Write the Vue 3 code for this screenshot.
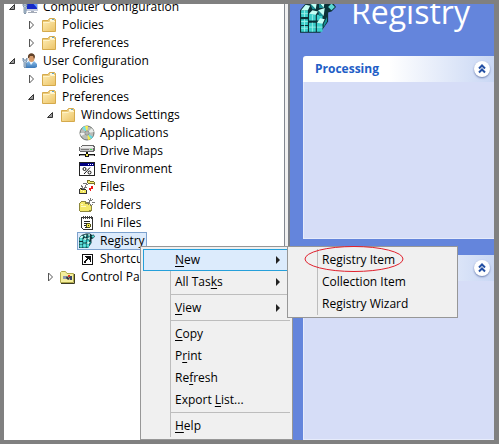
<script setup>
const tree = [
  { label: 'Computer Configuration', icon: 'computer', level: 0, state: 'open' },
  { label: 'Policies', icon: 'folder', level: 1, state: 'closed' },
  { label: 'Preferences', icon: 'folder', level: 1, state: 'closed' },
  { label: 'User Configuration', icon: 'user', level: 0, state: 'open' },
  { label: 'Policies', icon: 'folder', level: 1, state: 'closed' },
  { label: 'Preferences', icon: 'folder', level: 1, state: 'open' },
  { label: 'Windows Settings', icon: 'folder', level: 2, state: 'open' },
  { label: 'Applications', icon: 'disc', level: 3 },
  { label: 'Drive Maps', icon: 'drive', level: 3 },
  { label: 'Environment', icon: 'environment', level: 3 },
  { label: 'Files', icon: 'files', level: 3 },
  { label: 'Folders', icon: 'folders', level: 3 },
  { label: 'Ini Files', icon: 'ini', level: 3 },
  { label: 'Registry', icon: 'registry', level: 3, selected: true },
  { label: 'Shortcuts', icon: 'shortcut', level: 3 },
  { label: 'Control Panel Settings', icon: 'control', level: 2, state: 'closed' },
]

const menu = [
  { parts: ['', 'N', 'ew'], sub: true, active: true },
  { parts: ['All Tas', 'k', 's'], sub: true },
  { separator: true },
  { parts: ['', 'V', 'iew'], sub: true },
  { separator: true },
  { parts: ['', 'C', 'opy'] },
  { parts: ['P', 'r', 'int'] },
  { parts: ['Re', 'f', 'resh'] },
  { parts: ['Export ', 'L', 'ist...'] },
  { separator: true },
  { parts: ['', 'H', 'elp'] },
]

const submenu = ['Registry Item', 'Collection Item', 'Registry Wizard']
</script>

<template>
  <svg class="defs" aria-hidden="true">
    <linearGradient id="gold" x1="0" y1="0" x2="1" y2="1">
      <stop offset="0" stop-color="#fdebb0" /><stop offset="1" stop-color="#ecc468" />
    </linearGradient>
    <linearGradient id="shirt" x1="0" y1="0" x2="0" y2="1">
      <stop offset="0" stop-color="#8fc0ea" /><stop offset="1" stop-color="#3b78b8" />
    </linearGradient>
    <symbol id="folder" viewBox="0 0 16 16">
      <path d="M1.5 3.5V14.5H14.5V2.5L13.5 1.5H8.5L7 3.5Z" fill="#eccb78" stroke="#d5aa4c" />
      <path d="M9 2H13V4H9Z" fill="#fff8dd" /><path d="M11 2H13V3H11Z" fill="#62a8cf" />
      <path d="M2 5.5H8L9.5 4.5H14V14H2Z" fill="url(#gold)" />
      <path d="M2 5.5H8L9.5 4.5H14" fill="none" stroke="#fff3c8" />
    </symbol>
    <symbol id="computer" viewBox="0 0 16 16">
      <path d="M4 1H16V12H4Z" fill="#c3cbdc" /><path d="M5 2H15V10H5Z" fill="#1529c8" />
      <path d="M9 2H15V9Z" fill="#6296ff" /><path d="M9 12H12V13H15V14H6V13H9Z" fill="#a4abb8" />
      <path d="M1 3L2 6H4L5 3V7L4 8V14L3 15L2 14V8L1 7Z" fill="#b6c7d8" stroke="#60758d" stroke-width=".7" />
    </symbol>
    <symbol id="user" viewBox="0 0 16 16">
      <path d="M4 15V10L7 8H12L15 11V14L13 15Z" fill="url(#shirt)" />
      <path d="M7 8L9 12L12 8Z" fill="#eef6fc" />
      <ellipse cx="9.5" cy="5" rx="3" ry="4" fill="#d69a6b" />
      <path d="M6 5C5-1 13-1 13 4L12 6L11 3L8 3L7 5Z" fill="#604129" />
      <path d="M1 5L2 7H4L5 5V8L4 9V14L3 15L2 14V9L1 8Z" fill="#b8ccdf" stroke="#5a7795" stroke-width=".7" />
    </symbol>
    <symbol id="disc" viewBox="0 0 16 16">
      <circle cx="8" cy="8" r="7" fill="#b9bdb9" stroke="#6b706b" />
      <path d="M8 8L3 3L6 1Z" fill="#72e4e8" /><path d="M8 8L6 1L9 1Z" fill="#f6ed50" />
      <path d="M8 8L9 15L12 14Z" fill="#f0e94c" /><path d="M8 8L12 14L14 12Z" fill="#65dce6" />
      <path d="M8 8L1 8L2 11Z" fill="#f0f0f0" /><path d="M8 8L13 3L15 7Z" fill="#e9ece9" />
      <circle cx="8" cy="8" r="2" fill="#fff" stroke="#7b807b" /><circle cx="8" cy="8" r=".8" fill="#555" />
    </symbol>
    <symbol id="drive" viewBox="0 0 16 16" shape-rendering="crispEdges">
      <path d="M3 2H14L16 4V8H15V9H1V8H0V4H1Z" fill="#686868" /><path d="M3 3H14V4H15V5H1V4H3Z" fill="#efefef" />
      <path d="M1 5H14V8H1Z" fill="#c6c6c6" /><path d="M2 6H10V7H2Z" fill="#777" /><path d="M11 6H13V7H11Z" fill="#3ed94c" />
      <path d="M7 9H9V11H16V13H10V14H6V13H0V11H7Z" fill="#111" /><path d="M1 12H6V13H1ZM10 12H15V13H10Z" fill="#aaa" />
      <path d="M7 11H9V13H7Z" fill="#f2e64a" />
    </symbol>
    <symbol id="environment" viewBox="0 0 16 16">
      <g shape-rendering="crispEdges">
        <path d="M0 1H16V15H0Z" fill="#222" /><path d="M1 2H15V5H1Z" fill="#000080" />
        <path d="M9 3H10V4H9ZM11 3H12V4H11ZM13 3H14V4H13Z" fill="#fff" /><path d="M1 5H15V14H1Z" fill="#fff" />
      </g>
      <g fill="none" stroke="#111">
        <circle cx="5.500" cy="8" r="1.500" /><circle cx="10.500" cy="11.500" r="1.500" /><path d="M11 6.500L5 13" />
      </g>
    </symbol>
    <symbol id="files" viewBox="0 0 16 16" shape-rendering="crispEdges">
      <path d="M8 1H11V2H15V3H16V6H15V5H9V4H8Z" fill="#77712b" /><path d="M9 2H11V3H15V4H9Z" fill="#f6ec72" />
      <path d="M4 4H8V5H9V6H7V8H8V9H6V10H3V8H2V6H4Z" fill="#777" />
      <path d="M4 5H7V6H6V8H5V9H4V7H3V6H4Z" fill="#fff" />
      <path d="M1 9H3V10H7V11H8V15H0V10H1Z" fill="#333" /><path d="M1 10H2V11H7V14H1Z" fill="#f2e75c" />
      <path d="M2 11H3V12H2ZM4 12H5V13H4Z" fill="#fffbd0" />
      <path d="M12 7H14V10H12V12H11V11H10V9H12Z" fill="#f01818" />
    </symbol>
    <symbol id="folders" viewBox="0 0 16 16" shape-rendering="crispEdges">
      <path d="M0 6L2 4H6L8 6H11V8H13V13L11 15H1L0 14Z" fill="#8d873c" />
      <path d="M1 6H2V5H6V7H11V9H12V13H10V14H1Z" fill="#f4e96a" />
      <path d="M2 7H4V8H2ZM2 9H7V10H2Z" fill="#fffbc5" />
      <path d="M11.5 1V9M8 5.5H16M9 2L14 8M14 2L9 8" stroke="#777" fill="none" />
      <path d="M11 4H13V7H11Z" fill="#fff" />
    </symbol>
    <symbol id="ini" viewBox="0 0 16 16" shape-rendering="crispEdges">
      <path d="M2.5 2.5H13.5V14.5H4.5L2.5 12.5Z" fill="#fff" stroke="#333" />
      <path d="M4.500 1V4M6.500 1V4M8.500 1V4M10.500 1V4M12.500 1V4" stroke="#444" fill="none" />
      <path d="M5 6.500H11M5 8.500H8M5 10.500H7M6 12.500H8" stroke="#222" fill="none" />
      <path d="M8 8H11V9H12V12H11V13H8V12H7V9H8Z" fill="#555318" /><path d="M8 9H11V12H8Z" fill="#f1e94c" /><path d="M9 10H10V11H9Z" fill="#222" />
    </symbol>
    <symbol id="registry" viewBox="0 0 32 32">
      <path d="M0 10L5 4L11 2L14 1L22 1L26 4L29 3L32 7L28 11L25 12V20L18 30H0Z" fill="#0a3137" />
      <path d="M1 10H7V16H1ZM8 13H14V19H8ZM1 18H7V23H1ZM1 24H7V29H1ZM8 21H14V29H8ZM15 21H20V29H15ZM15 14H20V19H15Z" fill="#3ccfcb" />
      <path d="M1 10L5 5L9 6L7 10ZM8 13L11 10L16 11L14 14ZM15 21L18 17L22 18L20 22ZM9 4L15 3L14 9ZM17 3L22 2L21 8ZM16 10L22 8L21 15Z" fill="#c4fff5" />
      <path d="M9 4L14 9L11 9ZM17 3L21 8L17 8ZM16 10L21 15L17 15ZM21 22L24 16L24 20L21 25Z" fill="#179298" />
      <path d="M25 7L28 4L31 7L28 10Z" fill="#5bd9d3" />
      <path d="M1 13H7M4 10V16M4 18V29M1 20H7M1 26H7M11 14V19M11 21V29M8 25H14M15 25H20" stroke="#a5f4ec" stroke-width=".7" />
    </symbol>
    <symbol id="shortcut" viewBox="0 0 16 16" shape-rendering="crispEdges">
      <path d="M3.5 3.5H13.5V13.5H3.5Z" fill="#fff" stroke="#111" />
      <path d="M6 5H12V11H11V9H10V8H9V9H8V10H7V12H5V10H6V9H7V8H8V7H7V6H6Z" fill="#111" />
    </symbol>
    <symbol id="control" viewBox="0 0 16 16">
      <path d="M.5 3.5L1.5 2.5H5.5L7 4.5H13.500V13.5H.5Z" fill="#f5ef9c" stroke="#b0a94c" />
      <path d="M1 14.5H14.5V5" fill="none" stroke="#3c3b23" />
      <path d="M3 7H7V10H3Z" fill="#8e99ae" /><path d="M7 7L10 10L8 11L6 9Z" fill="#353640" /><path d="M9 7H12V11H10V9H9Z" fill="#39466d" />
      <path d="M8 6H10V8H8Z" fill="#d5382b" />
    </symbol>
  </svg>

  <main class="window">
    <nav class="tree-pane" aria-label="Console tree">
      <ul class="tree">
        <li v-for="(node, i) in tree" :key="i" class="node" :class="`level-${node.level}`">
          <span class="toggle">
            <svg v-if="node.state === 'open'" width="8" height="8" viewBox="0 0 8 8"><path d="M6.5 1.5V6.5H1.5Z" fill="#999" stroke="#333" /></svg>
            <svg v-else-if="node.state === 'closed'" width="8" height="10" viewBox="0 0 8 10"><path d="M2.5 1L6.5 5L2.5 9Z" fill="#fff" stroke="#555" /></svg>
          </span>
          <button type="button" class="entry" :class="{ selected: node.selected }">
            <svg class="icon" aria-hidden="true"><use :href="`#${node.icon}`" /></svg>
            <span>{{ node.label }}</span>
          </button>
        </li>
      </ul>
    </nav>
    <div class="splitter"></div>
    <section class="details">
      <header class="banner">
        <svg class="banner-icon" aria-hidden="true"><use href="#registry" /></svg>
        <h1>Registry</h1>
      </header>
      <article class="panel">
        <div class="panel-head">
          <h2>Processing</h2>
          <button type="button" class="collapse" aria-label="Collapse Processing">
            <svg viewBox="0 0 16 16"><path d="M5 7.5L8 4.5L11 7.5M5 11.5L8 8.5L11 11.5" /></svg>
          </button>
        </div>
        <div class="panel-body"></div>
      </article>
      <article class="panel grow">
        <div class="panel-head">
          <button type="button" class="collapse" aria-label="Collapse">
            <svg viewBox="0 0 16 16"><path d="M5 7.5L8 4.5L11 7.5M5 11.5L8 8.5L11 11.5" /></svg>
          </button>
        </div>
        <div class="panel-body"></div>
      </article>
    </section>

    <div class="menu context" role="menu">
      <template v-for="(item, i) in menu" :key="i">
        <div v-if="item.separator" class="separator" role="separator"></div>
        <button v-else type="button" role="menuitem" class="item" :class="{ active: item.active }">
          <span>{{ item.parts[0] }}<u>{{ item.parts[1] }}</u>{{ item.parts[2] }}</span>
          <svg v-if="item.sub" width="4" height="8" viewBox="0 0 4 8"><path d="M0 0L4 4L0 8Z" fill="#222" /></svg>
        </button>
      </template>
    </div>

    <div class="menu submenu" role="menu">
      <button v-for="label in submenu" :key="label" type="button" role="menuitem" class="item">
        <span>{{ label }}</span>
      </button>
      <svg class="marker" viewBox="0 0 100 28" aria-hidden="true"><ellipse cx="50" cy="14" rx="49" ry="12.5" /></svg>
    </div>
  </main>
</template>

<style>
body { margin: 0; }
</style>

<style scoped>
.defs { position: absolute; width: 0; height: 0; }
.window {
  position: relative;
  display: grid;
  grid-template-columns: 280px 6px 1fr;
  box-sizing: border-box;
  min-height: 100vh;
  border: 4px solid #808080;
  border-right-width: 5px;
  overflow: hidden;
  background: #fff;
  color: #000;
  font: 12px/18px "Open Sans", "Noto Sans", sans-serif;
}
button {
  margin: 0;
  border: 0;
  padding: 0;
  background: none;
  color: inherit;
  font: inherit;
  text-align: left;
  white-space: nowrap;
}
.tree-pane { overflow: hidden; }
.tree { list-style: none; margin: -6px 0 0; padding: 0 0 0 4px; }
.node { display: flex; height: 18px; }
.level-1 { padding-left: 19px; }
.level-2 { padding-left: 38px; }
.level-3 { padding-left: 57px; }
.toggle { display: flex; align-items: center; justify-content: center; flex: none; width: 8px; margin-right: 4px; }
.toggle svg { flex: none; }
.entry {
  display: flex;
  align-items: center;
  gap: 5px;
  box-sizing: border-box;
  height: 18px;
  padding: 0 1px;
  border: 1px solid transparent;
}
.entry.selected { background: #dcebfc; border-color: #7da2ce; }
.icon { flex: none; width: 16px; height: 16px; }
.splitter {
  box-sizing: border-box;
  background: #f0f0f0;
  border-left: 1px solid #828790;
  border-right: 2px solid #7b7f88;
}
.details {
  display: flex;
  flex-direction: column;
  gap: 16px;
  overflow: hidden;
  padding-left: 13px;
  background: #6485dc;
}
.banner { display: flex; height: 36px; gap: 15px; align-items: flex-start; margin-left: -3px; }
.banner-icon { flex: none; width: 36px; height: 36px; margin-top: -5px; }
h1 { margin: -14px 0 0; color: #fff; font-size: 32px; line-height: 44px; font-weight: 400; }
.panel { display: flex; flex-direction: column; }
.panel-head {
  display: flex;
  align-items: center;
  box-sizing: border-box;
  height: 26px;
  padding: 0 4px 0 12px;
  border-radius: 3px 0 0 0;
  background: linear-gradient(90deg, #fff 45%, #c9d7f4);
}
h2 { margin: 0; color: #215dc6; font-size: 12px; line-height: 18px; font-weight: 700; }
.collapse {
  width: 16px;
  height: 16px;
  margin-left: auto;
  border-radius: 50%;
  background: #fff;
  box-shadow: 0 1px 2px #6c7fb0;
}
.collapse svg { display: block; fill: none; stroke: #2450a4; stroke-width: 2; }
.panel-body { min-height: 157px; box-sizing: border-box; background: #d6ddf7; border-left: 1px solid #e6ebfb; border-bottom: 1px solid #e6ebfb; }
.grow, .grow .panel-body { flex: 1; }
.menu {
  position: absolute;
  top: 242px;
  box-sizing: border-box;
  padding: 2px;
  border: 1px solid #979797;
  background: linear-gradient(#bdbdbd, #bdbdbd) 29px 2px / 1px calc(100% - 4px) no-repeat #f0f0f0;
}
.context { left: 136px; width: 153px; }
.submenu { left: 283px; width: 171px; }
.item {
  display: flex;
  align-items: center;
  justify-content: space-between;
  box-sizing: border-box;
  width: 100%;
  height: 22px;
  padding: 0 10px 0 32px;
}
.item.active { background: #dcebfc; box-shadow: inset 0 0 0 1px #26a0da; }
.item u { text-decoration: underline; text-underline-offset: 2px; text-decoration-skip-ink: none; }
.separator { height: 1px; margin: 1px 0 2px 28px; background: #bdbdbd; }
.marker { position: absolute; left: 16px; top: -2px; width: 100px; height: 28px; fill: none; stroke: #e0202c; stroke-width: 1; pointer-events: none; }
</style>
